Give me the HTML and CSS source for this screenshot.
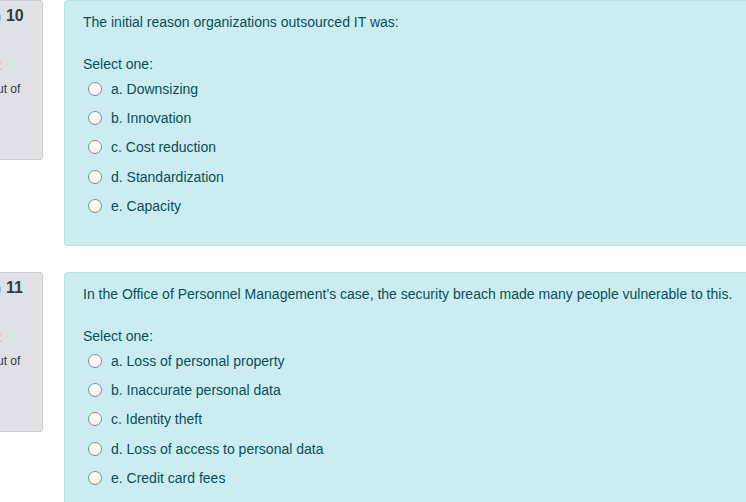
FILE: index.html
```html
<!DOCTYPE html>
<html>
<head>
<meta charset="utf-8">
<link rel="stylesheet" href="styles.css">
</head>
<body>
<div class="page">
  <div class="que">
    <div class="info">
      <h3 class="no">Question <span class="qno">10</span></h3>
      <div class="state">Incorrect</div>
      <div class="grade">Marked out of 1.00</div>
    </div>
    <div class="formulation">
      <div class="qtext">The initial reason organizations outsourced IT was:</div>
      <div class="prompt">Select one:</div>
      <div class="answer">
        <label class="option"><span class="radio"></span>a. Downsizing</label>
        <label class="option"><span class="radio"></span>b. Innovation</label>
        <label class="option"><span class="radio"></span>c. Cost reduction</label>
        <label class="option"><span class="radio"></span>d. Standardization</label>
        <label class="option"><span class="radio"></span>e. Capacity</label>
      </div>
    </div>
  </div>
  <div class="que">
    <div class="info">
      <h3 class="no">Question <span class="qno">11</span></h3>
      <div class="state">Incorrect</div>
      <div class="grade">Marked out of 1.00</div>
    </div>
    <div class="formulation">
      <div class="qtext">In the Office of Personnel Management’s case, the security breach made many people vulnerable to this.</div>
      <div class="prompt">Select one:</div>
      <div class="answer">
        <label class="option"><span class="radio"></span>a. Loss of personal property</label>
        <label class="option"><span class="radio"></span>b. Inaccurate personal data</label>
        <label class="option"><span class="radio"></span>c. Identity theft</label>
        <label class="option"><span class="radio"></span>d. Loss of access to personal data</label>
        <label class="option"><span class="radio"></span>e. Credit card fees</label>
      </div>
    </div>
  </div>
</div>
</body>
</html>
```

FILE: styles.css
```css
html, body {
  margin: 0;
  padding: 0;
  background: #ffffff;
  overflow: hidden;
}
body {
  font-family: "Liberation Sans", Arial, Helvetica, sans-serif;
  width: 746px;
  height: 502px;
}
.page {
  display: flex;
  flex-direction: column;
  gap: 26px;
}
.que {
  display: flex;
  align-items: flex-start;
  gap: 21px;
}
.info {
  flex: 0 0 105px;
  box-sizing: border-box;
  height: 160px;
  margin-left: -62px;
  padding: 6px 8px;
  background: #dee2e6;
  border: 1px solid #cad0d7;
  border-radius: 3px;
  color: #343a40;
}
.no {
  margin: 0 0 0 -2px;
  font-size: 14px;
  font-weight: normal;
  line-height: 18px;
  white-space: nowrap;
}
.qno {
  font-size: 16px;
  font-weight: bold;
  margin-left: 1px;
}
.state {
  margin-top: 31px;
  font-size: 14px;
  line-height: 18px;
  color: #f09aa4;
  white-space: nowrap;
}
.grade {
  margin-top: 8px;
  font-size: 12px;
  line-height: 15px;
  color: #343a40;
  width: 82px;
}
.formulation {
  flex: 1 1 auto;
  margin-right: -20px;
  box-sizing: border-box;
  min-height: 246px;
  padding: 11px 18px 24px;
  background: #cbedf2;
  border: 1px solid #b5e2e9;
  border-radius: 3px;
  color: #0a4d57;
  font-size: 14px;
}
.qtext {
  line-height: 20px;
}
.prompt {
  margin-top: 22px;
  line-height: 20px;
}
.answer {
  display: flex;
  flex-direction: column;
}
.option {
  display: flex;
  align-items: center;
  height: 29.3px;
  padding-left: 5px;
}
.radio {
  box-sizing: border-box;
  width: 14px;
  height: 14px;
  margin-right: 9px;
  border: 1px solid #85888b;
  border-radius: 50%;
  background: linear-gradient(#ffffff, #f0f0f0);
}
```
